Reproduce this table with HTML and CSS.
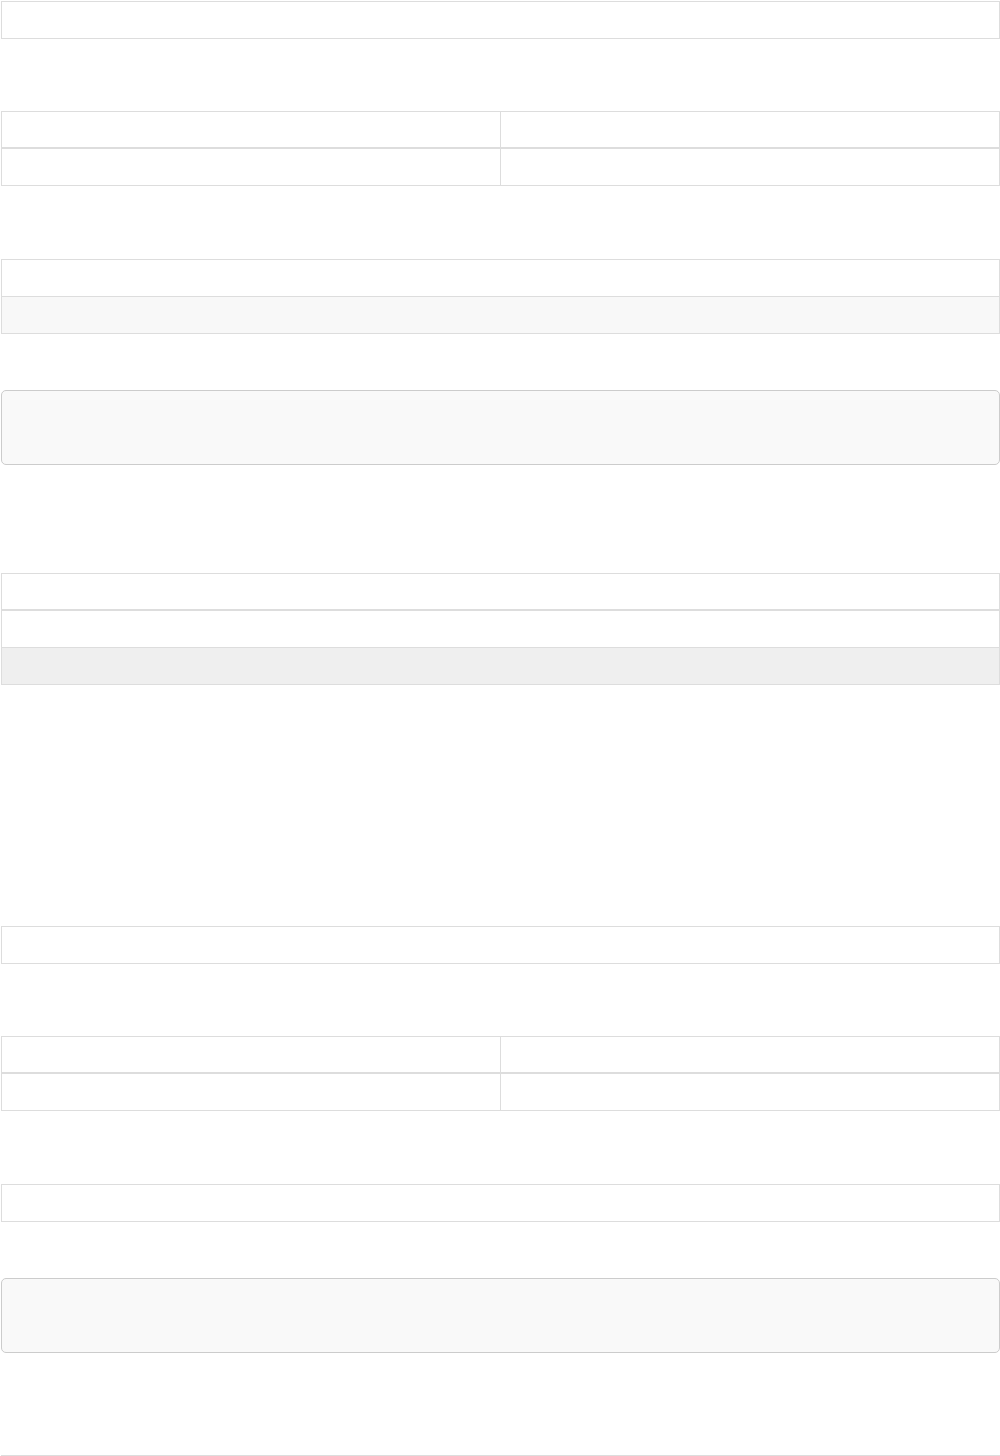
FILE: index.html
```
<!DOCTYPE html>
<html lang="en">
<head>
  <meta charset="UTF-8" />
  <meta name="viewport" content="width=device-width, initial-scale=1.0"/>
  <title>Report</title>
  <link rel="stylesheet" href="styles.css">
</head>
<body>

  <table class="grid gap-none">
    <tr><td></td></tr>
  </table>

  <table class="grid gap-lg">
    <thead><tr><th></th><th></th></tr></thead>
    <tbody><tr><td></td><td></td></tr></tbody>
  </table>

  <table class="grid gap-after-head">
    <tr><td></td></tr>
    <tr class="striped"><td></td></tr>
  </table>

  <div class="note gap-md"></div>

  <table class="grid gap-xl">
    <thead><tr><th></th></tr></thead>
    <tbody>
      <tr><td></td></tr>
      <tr class="shaded"><td></td></tr>
    </tbody>
  </table>

  <!-- second block -->
  <table class="grid gap-xxl">
    <tr><td></td></tr>
  </table>

  <table class="grid gap-lg">
    <thead><tr><th></th><th></th></tr></thead>
    <tbody><tr><td></td><td></td></tr></tbody>
  </table>

  <table class="grid gap-after-head">
    <tr><td></td></tr>
  </table>

  <div class="note gap-md"></div>

  <table class="grid gap-end">
    <tr><td></td></tr>
  </table>

</body>
</html>
```

FILE: styles.css
```
body {
  margin: 0;
  padding: 1px 0 0 1px;
  background-color: white;
  font-family: 'Liberation Sans', Arial, sans-serif;
  font-size: 14px;
  color: #333;
}

.grid {
  width: 100%;
  border-collapse: collapse;
  table-layout: fixed;
}

.grid th,
.grid td {
  border: 1px solid #ddd;
  height: 36px;
  padding: 0;
}

.grid thead th {
  border-bottom: 2px solid #ddd;
  height: 35px;
}

.grid .striped td {
  background-color: #f8f8f8;
}

.grid .shaded td {
  background-color: #efefef;
}

.note {
  height: 73px;
  background-color: #f9f9f9;
  border: 1px solid #ccc;
  border-radius: 5px;
}

.gap-none { margin-top: 0; }
.gap-lg { margin-top: 72px; }
.gap-after-head { margin-top: 73px; }
.gap-md { margin-top: 56px; }
.gap-xl { margin-top: 108px; }
.gap-xxl { margin-top: 241px; }
.gap-end { margin-top: 102px; }
```
